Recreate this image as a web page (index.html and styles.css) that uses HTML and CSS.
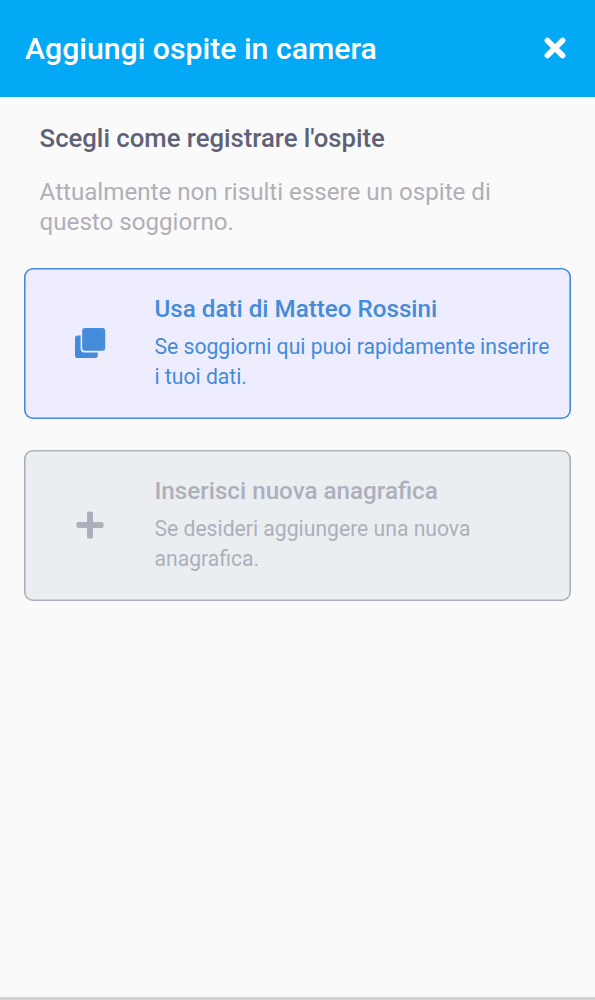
FILE: index.html
```html
<!DOCTYPE html>
<html lang="it">
<head>
<meta charset="utf-8">
<title>Aggiungi ospite in camera</title>
<link rel="stylesheet" href="styles.css">
</head>
<body>
<header class="topbar">
  <h1 class="topbar-title"><span>Aggiungi ospite in camera</span></h1>
  <button class="close" aria-label="Chiudi">
    <svg width="22" height="22" viewBox="0 0 22 22"><path d="M3.4 3.4 18.6 18.6M18.6 3.4 3.4 18.6" fill="none" stroke="currentColor" stroke-width="5.6" stroke-linecap="round"/></svg>
  </button>
</header>
<main class="content">
  <section class="intro">
    <h2 class="intro-title"><span>Scegli come registrare l'ospite</span></h2>
    <p class="intro-text"><span>Attualmente non risulti essere un ospite di</span><br><span>questo soggiorno.</span></p>
  </section>
  <div class="card card-primary">
    <div class="card-icon">
      <svg width="32" height="32" viewBox="0 0 32 32" fill="currentColor"><rect x="8.2" y="1" width="23" height="22.8" rx="2.8"/><path d="M6.6 8.6H3.8A2.8 2.8 0 0 0 1 11.4V28.2A2.8 2.8 0 0 0 3.8 31H21A2.8 2.8 0 0 0 23.8 28.2V25.4H10.6A4 4 0 0 1 6.6 21.4Z"/></svg>
    </div>
    <div class="card-body">
      <h3 class="card-title"><span>Usa dati di Matteo Rossini</span></h3>
      <p class="card-text"><span>Se soggiorni qui puoi rapidamente inserire</span><br><span>i tuoi dati.</span></p>
    </div>
  </div>
  <div class="card card-muted">
    <div class="card-icon">
      <svg width="28" height="28" viewBox="0 0 28 28" fill="currentColor"><rect x="11" y=".5" width="6" height="27" rx="1.8"/><rect x=".5" y="11" width="27" height="6" rx="1.8"/></svg>
    </div>
    <div class="card-body">
      <h3 class="card-title"><span>Inserisci nuova anagrafica</span></h3>
      <p class="card-text"><span>Se desideri aggiungere una nuova</span><br><span>anagrafica.</span></p>
    </div>
  </div>
</main>
<footer class="bottom-edge"></footer>
</body>
</html>
```
FILE: styles.css
```css
* {
  box-sizing: border-box;
}

body {
  margin: 0;
  min-height: 1000px;
  display: flex;
  flex-direction: column;
  background: #fafafa;
  font-family: Roboto, "Liberation Sans", sans-serif;
}

h1, h2, h3, p {
  margin: 0;
  font-weight: 500;
  white-space: nowrap;
}

.topbar {
  height: 97px;
  padding: 0 29px 1px 25px;
  display: flex;
  align-items: center;
  justify-content: space-between;
  background: #03a9f4;
  color: #fff;
}

.topbar-title {
  padding-top: 1px;
  font-size: 30.2px;
  line-height: 40px;
}

.close {
  display: flex;
  padding: 0;
  border: 0;
  background: none;
  color: inherit;
}

.content {
  flex: 1;
  padding: 0 24.4px;
}

.intro {
  padding: 25px 15.2px 0;
  height: 171px;
}

.intro-title {
  font-size: 25.7px;
  line-height: 32px;
  color: #5e6278;
}

.intro-text {
  margin-top: 23px;
  font-size: 24.15px;
  font-weight: 400;
  line-height: 30px;
  color: #b0afb8;
}

.card {
  height: 151px;
  margin-bottom: 31px;
  padding-bottom: 1px;
  display: flex;
  align-items: center;
  border-radius: 9px;
  box-shadow: inset 0 0 0 1.6px currentColor;
}

.card-primary {
  background: #ededff;
  color: #448bda;
}

.card-muted {
  background: #ebeef1;
  color: #abb0bb;
}

.card-icon {
  width: 130.1px;
  padding-left: 1px;
  display: flex;
  justify-content: center;
}

.card-body {
  padding-bottom: 4px;
}

.card-title {
  font-size: 24.2px;
  line-height: 36px;
}

.card-text {
  margin-top: 5px;
  font-size: 21.15px;
  font-weight: 400;
  line-height: 30px;
}

.bottom-edge {
  height: 3px;
  background: #d2d2d2;
}
```
